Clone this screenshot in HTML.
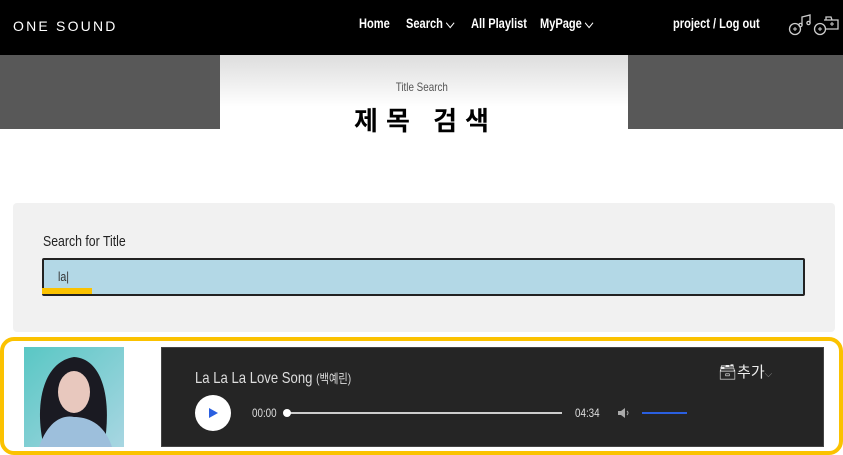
<!DOCTYPE html>
<html><head><meta charset="utf-8"><style>
*{margin:0;padding:0;box-sizing:border-box}
body{width:843px;height:455px;overflow:hidden;background:#fff;font-family:"Liberation Sans","Noto Sans CJK KR",sans-serif;position:relative}
.n{display:inline-block;transform:scaleX(.82);transform-origin:left center;white-space:nowrap}
.hdr{position:absolute;left:0;top:0;width:843px;height:55px;background:#000;color:#fff}
.logo{position:absolute;left:13px;top:18px;font-size:14px;letter-spacing:2.2px}
.nav{position:absolute;top:16px;font-size:13.5px;font-weight:bold}
.band{position:absolute;top:55px;left:0;width:843px;height:74px;background:#585858}
.mid{position:absolute;top:55px;left:220px;width:408px;height:74px;background:linear-gradient(#ddd,#fff 70%)}
.sub{position:absolute;top:80px;left:0;width:843px;text-align:center;font-size:12px;color:#555}
.ttl{position:absolute;top:101px;left:0;width:843px;text-align:center;font-size:26px;font-weight:bold;letter-spacing:8px;padding-left:8px;color:#000}
.panel{position:absolute;left:13px;top:203px;width:822px;height:129px;background:#f1f1f1;border-radius:4px}
.lbl{position:absolute;left:43px;top:233px;font-size:15px;color:#222}
.inp{position:absolute;left:42px;top:258px;width:763px;height:38px;background:#b3d8e6;border:2px solid #222;border-radius:2px}
.card{position:absolute;left:0;top:337px;width:843px;height:118px;border:4px solid #fbc200;border-radius:14px;background:#fff}
.pl{position:absolute;left:161px;top:347px;width:663px;height:100px;background:#252525;border:1px solid #444}
</style></head><body>
<div class="hdr">
<div class="logo">ONE SOUND</div>
<div class="nav" style="left:359px"><span class="n">Home</span></div>
<div class="nav" style="left:406px"><span class="n">Search ⌵</span></div>
<div class="nav" style="left:471px"><span class="n">All Playlist</span></div>
<div class="nav" style="left:540px"><span class="n">MyPage ⌵</span></div>
<div class="nav" style="left:673px"><span class="n">project / Log out</span></div>
<svg style="position:absolute;left:788px;top:14px" width="52" height="24" viewBox="0 0 52 24" fill="none" stroke="#ccc" stroke-width="1.3">
<circle cx="7" cy="15" r="5.5"/><path d="M7 13v4M5 15h4" stroke-width="1"/><path d="M14 11V3l8-2v8"/><circle cx="12.5" cy="11" r="1.6"/><circle cx="20.5" cy="9" r="1.6"/>
<circle cx="32" cy="15" r="5.5"/><path d="M32 13v4M30 15h4" stroke-width="1"/><path d="M36 6h14v9H38M38 6V3h5l1 3"/><path d="M42 10h4M44 8v4" stroke-width="1"/>
</svg>
</div>
<div class="band"></div><div class="mid"></div>
<div class="sub"><span class="n" style="transform-origin:center">Title Search</span></div>
<div class="ttl">제목 검색</div>
<div class="panel"></div>
<div class="lbl"><span class="n">Search for Title</span></div>
<div class="inp"><span class="n" style="position:absolute;left:14px;top:9px;font-size:13px;color:#333">la|</span></div>
<div style="position:absolute;left:42px;top:288px;width:50px;height:6px;background:#fbc200"></div>
<div class="card"></div>
<svg style="position:absolute;left:24px;top:347px" width="100" height="100" viewBox="0 0 100 100">
<defs><linearGradient id="g" x1="0" y1="0" x2="1" y2="1"><stop offset="0" stop-color="#59c7c4"/><stop offset="1" stop-color="#a8d6e2"/></linearGradient></defs>
<rect width="100" height="100" fill="url(#g)"/>
<path d="M20 100 C10 60 18 15 50 10 C80 12 88 55 80 100Z" fill="#1a1a22"/>
<ellipse cx="50" cy="45" rx="16" ry="21" fill="#e8c8be"/>
<path d="M15 100 C25 72 40 68 50 70 C62 70 80 75 88 100Z" fill="#9dbfdc"/>
</svg>
<div class="pl"></div>
<div style="position:absolute;left:195px;top:368px;color:#ddd;font-size:16px"><span class="n">La La La Love Song <small style="font-size:12.5px">(백예린)</small></span></div>
<div style="position:absolute;left:718px;top:361px;color:#eee;font-size:15px">🗃추가<span style="font-size:10px;color:#888">⌵</span></div>
<div style="position:absolute;left:195px;top:395px;width:36px;height:36px;border-radius:50%;background:#fff"></div>
<div style="position:absolute;left:209px;top:408px;width:0;height:0;border-left:9px solid #2a5fe0;border-top:5px solid transparent;border-bottom:5px solid transparent"></div>
<div style="position:absolute;left:252px;top:406px;color:#ddd;font-size:12px"><span class="n">00:00</span></div>
<div style="position:absolute;left:286px;top:412px;width:276px;height:2px;background:#ccc"></div>
<div style="position:absolute;left:283px;top:409px;width:8px;height:8px;border-radius:50%;background:#fff"></div>
<div style="position:absolute;left:575px;top:406px;color:#ddd;font-size:12px"><span class="n">04:34</span></div>
<svg style="position:absolute;left:617px;top:407px" width="14" height="12" viewBox="0 0 14 12"><path d="M1 4h3l4-3v10L4 8H1z" fill="#aaa"/><path d="M10 4q2 2 0 4" stroke="#aaa" fill="none"/></svg>
<div style="position:absolute;left:642px;top:412px;width:45px;height:2px;background:#2a5fe0"></div>
</body></html>
